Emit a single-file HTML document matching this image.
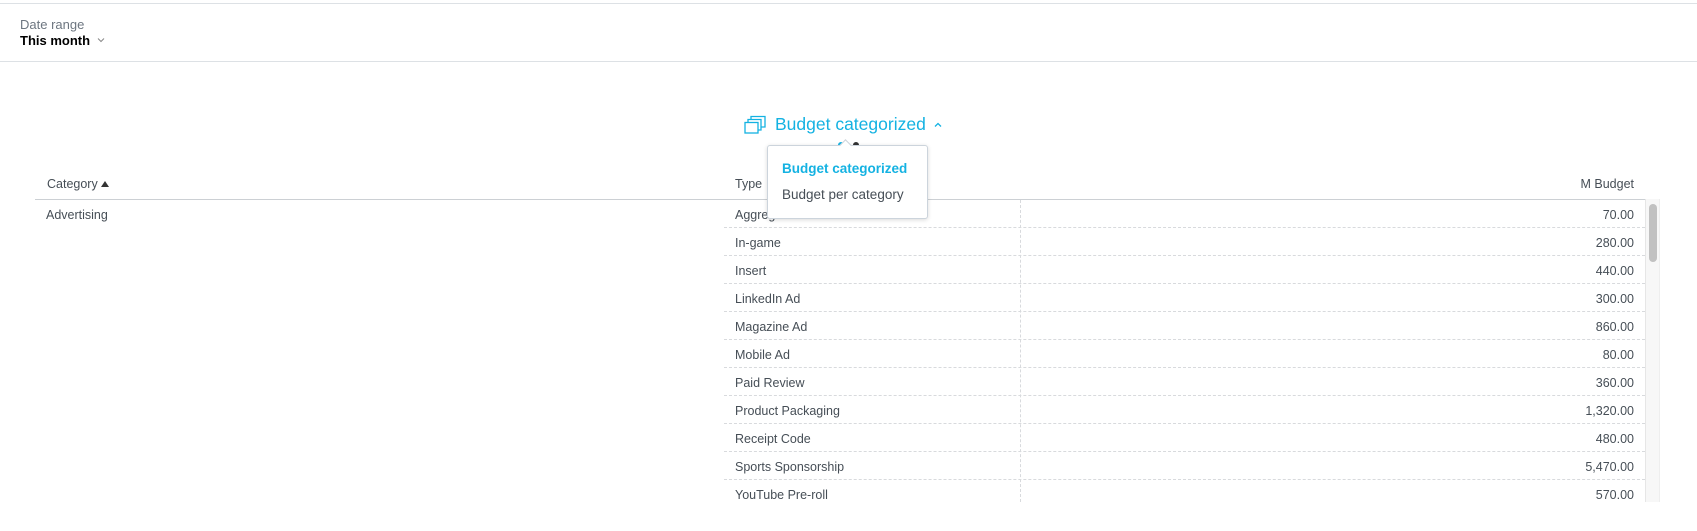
<!DOCTYPE html>
<html><head><style>
*{margin:0;padding:0;box-sizing:border-box}
body{width:1697px;height:531px;overflow:hidden;background:#fff;font-family:"Liberation Sans",sans-serif;color:#464e56;position:relative}
.a{position:absolute;white-space:nowrap}
.row{position:absolute;left:724px;width:921px;height:28px;border-bottom:1px dashed #d8dadd;font-size:12.5px}
.row .t{position:absolute;left:11px;top:8px}
.row .v{position:absolute;right:11px;top:8px}
</style></head><body>
<div class="a" style="left:0;top:3px;width:1697px;height:1px;background:#dde1e5"></div>
<div class="a" style="left:20px;top:17px;font-size:13px;color:#6d7680">Date range</div>
<div class="a" style="left:20px;top:33px;font-size:13px;font-weight:bold;color:#000">This month</div>
<svg class="a" style="left:97px;top:37px" width="8" height="6" viewBox="0 0 8 6" fill="none" stroke="#888" stroke-width="1"><path d="M1 1.5l3 3 3-3"/></svg>
<div class="a" style="left:0;top:61px;width:1697px;height:1px;background:#dde1e5"></div>

<svg class="a" style="left:744px;top:115px" width="24" height="20" viewBox="0 0 24 20" fill="none" stroke="#14b2e2" stroke-width="1.3"><rect x="1" y="7.5" width="13" height="10.5" fill="#fff"/><path d="M4 7.5V4.5h13v10.5h-3M7 4.5V1.5h14v10.5h-4"/></svg>
<div class="a" style="left:775px;top:114px;font-size:17.5px;color:#14b2e2">Budget categorized</div>
<svg class="a" style="left:934px;top:122px" width="8" height="6" viewBox="0 0 8 6" fill="none" stroke="#14b2e2" stroke-width="1.3"><path d="M1 4.5l3-3 3 3"/></svg>
<div class="a" style="left:838px;top:142px;width:6px;height:6px;border-radius:3px;background:#14b2e2"></div>
<div class="a" style="left:853px;top:142px;width:6px;height:6px;border-radius:3px;background:#333"></div>

<div class="a" style="left:47px;top:177px;font-size:12.5px">Category</div>
<svg class="a" style="left:101px;top:181px" width="8" height="6" viewBox="0 0 8 6"><path d="M0 6L4 0 8 6z" fill="#333"/></svg>
<div class="a" style="left:735px;top:177px;font-size:12.5px">Type</div>
<div class="a" style="right:63px;top:177px;font-size:12.5px">M Budget</div>
<div class="a" style="left:35px;top:199px;width:1610px;height:1px;background:#ccd0d4"></div>
<div class="a" style="left:46px;top:208px;font-size:12.5px">Advertising</div>
<div class="a" style="left:1020px;top:200px;width:0;height:302px;border-left:1px dashed #d8dadd"></div>

<div class="row" style="top:200px"><span class="t">Aggregator</span><span class="v">70.00</span></div>
<div class="row" style="top:228px"><span class="t">In-game</span><span class="v">280.00</span></div>
<div class="row" style="top:256px"><span class="t">Insert</span><span class="v">440.00</span></div>
<div class="row" style="top:284px"><span class="t">LinkedIn Ad</span><span class="v">300.00</span></div>
<div class="row" style="top:312px"><span class="t">Magazine Ad</span><span class="v">860.00</span></div>
<div class="row" style="top:340px"><span class="t">Mobile Ad</span><span class="v">80.00</span></div>
<div class="row" style="top:368px"><span class="t">Paid Review</span><span class="v">360.00</span></div>
<div class="row" style="top:396px"><span class="t">Product Packaging</span><span class="v">1,320.00</span></div>
<div class="row" style="top:424px"><span class="t">Receipt Code</span><span class="v">480.00</span></div>
<div class="row" style="top:452px"><span class="t">Sports Sponsorship</span><span class="v">5,470.00</span></div>
<div class="row" style="top:480px;border-bottom:none"><span class="t">YouTube Pre-roll</span><span class="v">570.00</span></div>

<div class="a" style="left:1645px;top:199px;width:15px;height:303px;background:#f7f7f7;border-left:1px solid #e6e6e6;border-right:1px solid #eee"></div>
<div class="a" style="left:1649px;top:204px;width:8px;height:58px;border-radius:4px;background:#c1c1c1"></div>

<div class="a" style="left:767px;top:145px;width:161px;height:74px;background:#fff;border:1px solid #ccd4dc;border-radius:3px;box-shadow:0 1px 4px rgba(0,0,0,.15)"></div>
<div class="a" style="left:841px;top:141px;width:9px;height:9px;background:#fff;border-left:1px solid #ccd4dc;border-top:1px solid #ccd4dc;transform:rotate(45deg)"></div>
<div class="a" style="left:782px;top:161px;font-size:13.5px;font-weight:bold;color:#14b2e2">Budget categorized</div>
<div class="a" style="left:782px;top:187px;font-size:13.5px;color:#464e56">Budget per category</div>
</body></html>
